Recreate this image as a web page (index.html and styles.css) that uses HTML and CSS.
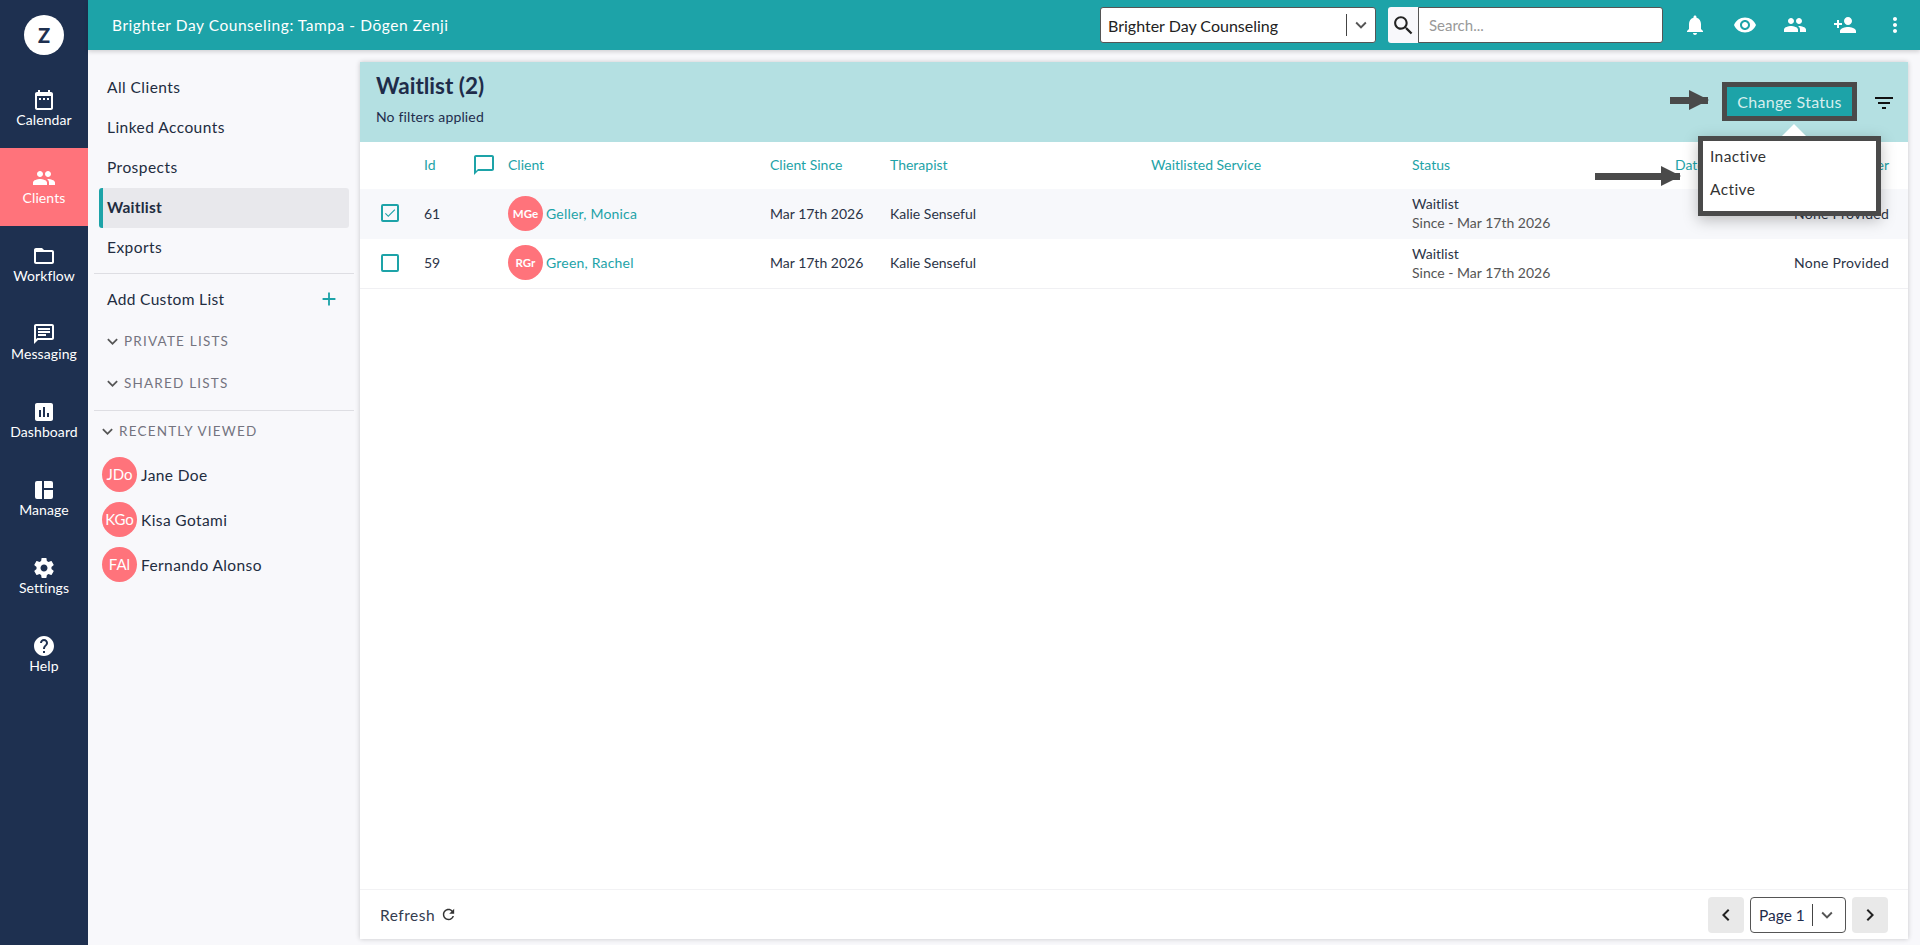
FILE: index.html
```html
<!doctype html>
<html>
<head>
  <meta charset="utf-8">
  <title>Waitlist</title>
  <link rel="stylesheet" href="styles.css">
</head>
<body>

<svg class="iconSheet" xmlns="http://www.w3.org/2000/svg">
  <symbol id="i-calendar" viewBox="0 0 24 24"><path d="M19 4h-1V2h-2v2H8V2H6v2H5c-1.1 0-2 .9-2 2v14c0 1.1.9 2 2 2h14c1.1 0 2-.9 2-2V6c0-1.1-.9-2-2-2zm0 16H5V8h14v12zM7 10h2v2H7zm4 0h2v2h-2zm4 0h2v2h-2z"/></symbol>
  <symbol id="i-people" viewBox="0 0 24 24"><path d="M16 11c1.66 0 2.99-1.34 2.99-3S17.66 5 16 5c-1.66 0-3 1.34-3 3s1.34 3 3 3zm-8 0c1.66 0 2.99-1.34 2.99-3S9.66 5 8 5C6.34 5 5 6.34 5 8s1.34 3 3 3zm0 2c-2.33 0-7 1.17-7 3.5V19h14v-2.5c0-2.33-4.67-3.5-7-3.5zm8 0c-.29 0-.62.02-.97.05 1.16.84 1.97 1.97 1.97 3.45V19h6v-2.5c0-2.33-4.67-3.5-7-3.5z"/></symbol>
  <symbol id="i-folder" viewBox="0 0 24 24"><path d="M20 6h-8l-2-2H4c-1.1 0-1.99.9-1.99 2L2 18c0 1.1.9 2 2 2h16c1.1 0 2-.9 2-2V8c0-1.1-.9-2-2-2zm0 12H4V8h16v10z"/></symbol>
  <symbol id="i-message" viewBox="0 0 24 24"><path d="M20 2H4c-1.1 0-2 .9-2 2v18l4-4h14c1.1 0 2-.9 2-2V4c0-1.1-.9-2-2-2zm0 14H5.17L4 17.17V4h16v12zM6 12h8v2H6zm0-3h12v2H6zm0-3h12v2H6z"/></symbol>
  <symbol id="i-chart" viewBox="0 0 24 24"><path d="M19 3H5c-1.1 0-2 .9-2 2v14c0 1.1.9 2 2 2h14c1.1 0 2-.9 2-2V5c0-1.1-.9-2-2-2zM9 17H7v-7h2v7zm4 0h-2V7h2v10zm4 0h-2v-4h2v4z"/></symbol>
  <symbol id="i-manage" viewBox="0 0 24 24"><path d="M5 3h5v18H5a2 2 0 0 1-2-2V5a2 2 0 0 1 2-2zm7 0h7a2 2 0 0 1 2 2v5h-9zm0 9h9v7a2 2 0 0 1-2 2h-7z"/></symbol>
  <symbol id="i-settings" viewBox="0 0 24 24"><path d="M19.43 12.98c.04-.32.07-.64.07-.98s-.03-.66-.07-.98l2.11-1.65c.19-.15.24-.42.12-.64l-2-3.46c-.12-.22-.39-.3-.61-.22l-2.49 1c-.52-.4-1.08-.73-1.69-.98l-.38-2.65C14.46 2.18 14.25 2 14 2h-4c-.25 0-.46.18-.49.42l-.38 2.65c-.61.25-1.17.59-1.69.98l-2.49-1c-.23-.09-.49 0-.61.22l-2 3.46c-.13.22-.07.49.12.64l2.11 1.65c-.04.32-.07.65-.07.98s.03.66.07.98l-2.11 1.65c-.19.15-.24.42-.12.64l2 3.46c.12.22.39.3.61.22l2.49-1c.52.4 1.08.73 1.69.98l.38 2.65c.03.24.24.42.49.42h4c.25 0 .46-.18.49-.42l.38-2.65c.61-.25 1.17-.59 1.69-.98l2.49 1c.23.09.49 0 .61-.22l2-3.46c.12-.22.07-.49-.12-.64l-2.11-1.65zM12 15.5c-1.93 0-3.5-1.57-3.5-3.5s1.57-3.5 3.5-3.5 3.5 1.57 3.5 3.5-1.57 3.5-3.5 3.5z"/></symbol>
  <symbol id="i-help" viewBox="0 0 24 24"><path d="M12 2C6.48 2 2 6.48 2 12s4.48 10 10 10 10-4.48 10-10S17.52 2 12 2zm1 17h-2v-2h2v2zm2.07-7.75l-.9.92C13.45 12.9 13 13.5 13 15h-2v-.5c0-1.1.45-2.1 1.17-2.83l1.24-1.26c.37-.36.59-.86.59-1.41 0-1.1-.9-2-2-2s-2 .9-2 2H8c0-2.21 1.79-4 4-4s4 1.79 4 4c0 .88-.36 1.68-.93 2.25z"/></symbol>
  <symbol id="i-bell" viewBox="0 0 24 24"><path d="M12 22c1.1 0 2-.9 2-2h-4c0 1.1.9 2 2 2zm6-6v-5c0-3.07-1.63-5.64-4.5-6.32V4c0-.83-.67-1.5-1.5-1.5s-1.5.67-1.5 1.5v.68C7.64 5.36 6 7.92 6 11v5l-2 2v1h16v-1l-2-2z"/></symbol>
  <symbol id="i-eye" viewBox="0 0 24 24"><path d="M12 4.5C7 4.5 2.73 7.61 1 12c1.73 4.39 6 7.5 11 7.5s9.27-3.11 11-7.5c-1.73-4.39-6-7.5-11-7.5zM12 17c-2.76 0-5-2.24-5-5s2.24-5 5-5 5 2.24 5 5-2.24 5-5 5zm0-8c-1.66 0-3 1.34-3 3s1.34 3 3 3 3-1.34 3-3-1.34-3-3-3z"/></symbol>
  <symbol id="i-personadd" viewBox="0 0 24 24"><path d="M15 12c2.21 0 4-1.79 4-4s-1.79-4-4-4-4 1.79-4 4 1.79 4 4 4zm-9-2V7H4v3H1v2h3v3h2v-3h3v-2H6zm9 4c-2.67 0-8 1.34-8 4v2h16v-2c0-2.66-5.33-4-8-4z"/></symbol>
  <symbol id="i-more" viewBox="0 0 24 24"><path d="M12 8c1.1 0 2-.9 2-2s-.9-2-2-2-2 .9-2 2 .9 2 2 2zm0 2c-1.1 0-2 .9-2 2s.9 2 2 2 2-.9 2-2-.9-2-2-2zm0 6c-1.1 0-2 .9-2 2s.9 2 2 2 2-.9 2-2-.9-2-2-2z"/></symbol>
  <symbol id="i-search" viewBox="0 0 24 24"><path d="M15.5 14h-.79l-.28-.27C15.41 12.59 16 11.11 16 9.5 16 5.91 13.09 3 9.5 3S3 5.91 3 9.5 5.91 16 9.5 16c1.61 0 3.09-.59 4.23-1.57l.27.28v.79l5 4.99L20.49 19l-4.99-5zm-6 0C7.01 14 5 11.99 5 9.5S7.01 5 9.5 5 14 7.01 14 9.5 11.99 14 9.5 14z"/></symbol>
  <symbol id="i-refresh" viewBox="0 0 24 24"><path d="M17.65 6.35C16.2 4.9 14.21 4 12 4c-4.42 0-7.99 3.58-7.99 8s3.57 8 7.99 8c3.73 0 6.84-2.55 7.73-6h-2.08c-.82 2.33-3.04 4-5.65 4-3.31 0-6-2.69-6-6s2.69-6 6-6c1.66 0 3.14.69 4.22 1.78L13 11h7V4l-2.35 2.35z"/></symbol>
  <symbol id="i-chat" viewBox="0 0 24 24"><path d="M20 2H4c-1.1 0-2 .9-2 2v18l4-4h14c1.1 0 2-.9 2-2V4c0-1.1-.9-2-2-2zm0 14H6l-2 2V4h16v12z"/></symbol>
  <symbol id="i-filter" viewBox="0 0 24 24"><path d="M10 18h4v-2h-4v2zM3 6v2h18V6H3zm3 7h12v-2H6v2z"/></symbol>
  <symbol id="i-down" viewBox="0 0 24 24"><path d="M7.41 8.59 12 13.17l4.59-4.58L18 10l-6 6-6-6z"/></symbol>
  <symbol id="i-left" viewBox="0 0 24 24"><path d="M15.41 16.59 10.83 12l4.58-4.59L14 6l-6 6 6 6z"/></symbol>
  <symbol id="i-right" viewBox="0 0 24 24"><path d="M8.59 16.59 13.17 12 8.59 7.41 10 6l6 6-6 6z"/></symbol>
  <symbol id="i-plus" viewBox="0 0 24 24"><path d="M19 13h-6v6h-2v-6H5v-2h6V5h2v6h6z"/></symbol>
  <symbol id="i-check" viewBox="0 0 24 24"><path d="M9 16.2 4.8 12l-1.4 1.4L9 19 21 7l-1.4-1.4z"/></symbol>
</svg>

<nav class="mainNav">
  <div class="logoWrap"><div class="logo">Z</div></div>
  <a class="navItem"><svg class="navIcon"><use href="#i-calendar"/></svg><span>Calendar</span></a>
  <a class="navItem active"><svg class="navIcon"><use href="#i-people"/></svg><span>Clients</span></a>
  <a class="navItem"><svg class="navIcon"><use href="#i-folder"/></svg><span>Workflow</span></a>
  <a class="navItem"><svg class="navIcon"><use href="#i-message"/></svg><span>Messaging</span></a>
  <a class="navItem"><svg class="navIcon"><use href="#i-chart"/></svg><span>Dashboard</span></a>
  <a class="navItem"><svg class="navIcon"><use href="#i-manage"/></svg><span>Manage</span></a>
  <a class="navItem"><svg class="navIcon"><use href="#i-settings"/></svg><span>Settings</span></a>
  <a class="navItem"><svg class="navIcon"><use href="#i-help"/></svg><span>Help</span></a>
</nav>

<div class="rightSide">
  <header class="topBar">
    <div class="topTitle">Brighter Day Counseling: Tampa - Dōgen Zenji</div>
    <div class="practiceSelect">
      <span class="practiceName">Brighter Day Counseling</span>
      <span class="selectDivider"></span>
      <svg class="selectArrow"><use href="#i-down"/></svg>
    </div>
    <div class="searchBox">
      <span class="searchBtn"><svg><use href="#i-search"/></svg></span>
      <span class="searchInput">Search...</span>
    </div>
    <div class="topIcons">
      <svg><use href="#i-bell"/></svg>
      <svg><use href="#i-eye"/></svg>
      <svg><use href="#i-people"/></svg>
      <svg><use href="#i-personadd"/></svg>
      <svg><use href="#i-more"/></svg>
    </div>
  </header>

  <div class="content">
    <aside class="subNav">
      <div class="subLinks">
        <a class="subLink">All Clients</a>
        <a class="subLink">Linked Accounts</a>
        <a class="subLink">Prospects</a>
        <a class="subLink current">Waitlist</a>
        <a class="subLink">Exports</a>
      </div>
      <div class="addList">
        <span>Add Custom List</span>
        <svg><use href="#i-plus"/></svg>
      </div>
      <div class="groupTitle"><svg><use href="#i-down"/></svg>PRIVATE LISTS</div>
      <div class="groupTitle"><svg><use href="#i-down"/></svg>SHARED LISTS</div>
      <div class="recentBlock">
        <div class="groupTitle recent"><svg><use href="#i-down"/></svg>RECENTLY VIEWED</div>
        <div class="recentRow"><span class="avatar big">JDo</span>Jane Doe</div>
        <div class="recentRow"><span class="avatar big">KGo</span>Kisa Gotami</div>
        <div class="recentRow"><span class="avatar big">FAl</span>Fernando Alonso</div>
      </div>
    </aside>

    <main class="card">
      <div class="cardHead">
        <div>
          <h1>Waitlist (2)</h1>
          <div class="filterNote">No filters applied</div>
        </div>
        <div class="headActions">
          <button class="statusBtn">Change Status</button>
          <svg class="filterIcon"><use href="#i-filter"/></svg>
        </div>
      </div>

      <div class="tableRow tableHead">
        <span></span>
        <span>Id</span>
        <span><svg class="chatIcon"><use href="#i-chat"/></svg></span>
        <span>Client</span>
        <span>Client Since</span>
        <span>Therapist</span>
        <span>Waitlisted Service</span>
        <span>Status</span>
        <span>Date Added</span>
        <span class="alignRight">Referrer</span>
      </div>

      <div class="tableRow dataRow shaded">
        <span class="checkBox"><svg><use href="#i-check"/></svg></span>
        <span>61</span>
        <span></span>
        <span class="clientCell"><span class="avatar">MGe</span><a>Geller, Monica</a></span>
        <span>Mar 17th 2026</span>
        <span>Kalie Senseful</span>
        <span></span>
        <span class="statusCell">Waitlist<small>Since - Mar 17th 2026</small></span>
        <span></span>
        <span class="alignRight">None Provided</span>
      </div>

      <div class="tableRow dataRow">
        <span class="checkBox"></span>
        <span>59</span>
        <span></span>
        <span class="clientCell"><span class="avatar">RGr</span><a>Green, Rachel</a></span>
        <span>Mar 17th 2026</span>
        <span>Kalie Senseful</span>
        <span></span>
        <span class="statusCell">Waitlist<small>Since - Mar 17th 2026</small></span>
        <span></span>
        <span class="alignRight">None Provided</span>
      </div>

      <div class="spacer"></div>

      <div class="cardFoot">
        <div class="refresh">Refresh <svg><use href="#i-refresh"/></svg></div>
        <div class="pager">
          <span class="pageBtn"><svg><use href="#i-left"/></svg></span>
          <span class="pageSelect">Page 1<span class="selectDivider"></span><svg class="selectArrow"><use href="#i-down"/></svg></span>
          <span class="pageBtn"><svg><use href="#i-right"/></svg></span>
        </div>
      </div>

      <!-- status menu and the two annotation arrows sit over the table -->
      <div class="statusMenu">
        <div>Inactive</div>
        <div>Active</div>
      </div>
      <div class="arrow arrowOne"></div>
      <div class="arrow arrowTwo"></div>
    </main>
  </div>
</div>

</body>
</html>
```

FILE: styles.css
```css
*{
  box-sizing: border-box;
}
html,body{
  height: 100%;
}
body{
  margin: 0;
  display: flex;
  overflow: hidden;
  background-color: #f8f8fb;
  color: #1f2d4d;
  font-family: "Lato", "Liberation Sans", sans-serif;
  font-size: 15px;
}
svg{
  fill: currentColor;
}
.iconSheet{
  display: none;
}

/* left nav */
.mainNav{
  width: 88px;
  flex: none;
  background-color: #1e3050;
  color: #fff;
}
.logoWrap{
  height: 70px;
  padding-top: 15px;
}
.logo{
  width: 40px;
  height: 40px;
  margin: 0 auto;
  border-radius: 50%;
  background-color: #fff;
  color: #1e3050;
  font-size: 20px;
  font-weight: 900;
  line-height: 40px;
  text-align: center;
}
.navItem{
  display: flex;
  flex-direction: column;
  align-items: center;
  height: 78px;
  padding-top: 18px;
  font-size: 14px;
  line-height: 18px;
  letter-spacing: 0.1px;
}
.navItem.active{
  background-color: #ff737b;
}
.navIcon{
  width: 24px;
  height: 24px;
  margin-bottom: -1px;
}

/* top bar */
.rightSide{
  flex: 1;
  min-width: 0;
  display: flex;
  flex-direction: column;
}
.topBar{
  height: 50px;
  flex: none;
  display: flex;
  align-items: center;
  padding-left: 24px;
  background-color: #1da3a8;
  color: #fff;
  box-shadow: 0 2px 4px rgba(0,0,0,0.15);
  position: relative;
  z-index: 2;
}
.topTitle{
  flex: 1;
  font-size: 15.5px;
  letter-spacing: 0.55px;
}
.practiceSelect{
  width: 276px;
  height: 36px;
  display: flex;
  align-items: center;
  padding-left: 7px;
  background-color: #fff;
  border: 1px solid #555;
  border-radius: 3px;
  color: #222;
}
.practiceName{
  flex: 1;
  font-size: 16px;
}
.selectDivider{
  width: 1px;
  height: 22px;
  background-color: #444;
}
.selectArrow{
  width: 22px;
  height: 22px;
  margin: 0 3px;
  color: #555;
}
.searchBox{
  width: 275px;
  height: 36px;
  margin-left: 12px;
  display: flex;
}
.searchBtn{
  width: 30px;
  display: flex;
  align-items: center;
  justify-content: center;
  background-color: #f8f8fb;
  border-radius: 3px 0 0 3px;
  color: #222;
}
.searchBtn svg{
  width: 25px;
  height: 25px;
}
.searchInput{
  flex: 1;
  padding-left: 10px;
  line-height: 34px;
  background-color: #fff;
  border: 1px solid #555;
  border-radius: 0 3px 3px 0;
  color: #999;
}
.topIcons{
  display: flex;
  width: 257px;
  padding-left: 20px;
  gap: 26px;
}
.topIcons svg{
  width: 24px;
  height: 24px;
}

.content{
  flex: 1;
  min-height: 0;
  display: flex;
}

/* lists column */
.subNav{
  width: 272px;
  flex: none;
  padding: 18px 6px 0;
  color: #222c40;
}
.subLinks{
  padding-left: 5px;
  padding-right: 5px;
}
.subLink{
  display: block;
  height: 40px;
  padding-left: 8px;
  line-height: 38px;
  font-size: 15.5px;
  letter-spacing: 0.45px;
}
.subLink.current{
  padding-left: 4px;
  border-left: 4px solid #1da3a8;
  border-radius: 3px;
  background-color: #e8e8ec;
  font-weight: 700;
  letter-spacing: 0.2px;
}
.addList{
  display: flex;
  justify-content: space-between;
  align-items: center;
  height: 47px;
  margin-top: 5px;
  padding: 3px 14px 0 13px;
  border-top: 1px solid #dedee3;
  font-size: 15.5px;
  letter-spacing: 0.35px;
}
.addList svg{
  width: 22px;
  height: 22px;
  color: #1da3a8;
}
.groupTitle{
  display: flex;
  align-items: center;
  height: 42px;
  padding-left: 8px;
  font-size: 13.5px;
  letter-spacing: 1.2px;
  color: #74747f;
}
.groupTitle svg{
  width: 21px;
  height: 21px;
  margin-right: 1px;
  color: #555;
}
.recentBlock{
  margin-top: 6px;
  border-top: 1px solid #dedee3;
}
.groupTitle.recent{
  height: 40px;
  padding-left: 3px;
  margin-bottom: 1px;
}
.recentRow{
  display: flex;
  align-items: center;
  gap: 4px;
  height: 45px;
  padding-left: 8px;
  font-size: 15.5px;
  letter-spacing: 0.4px;
}
.avatar{
  width: 35px;
  height: 35px;
  flex: none;
  border-radius: 50%;
  background-color: #ff737b;
  color: #fff;
  font-size: 11.5px;
  font-weight: 700;
  line-height: 35px;
  letter-spacing: 0;
  text-align: center;
}
.avatar.big{
  font-size: 15px;
  font-weight: 400;
}

/* the card */
.card{
  position: relative;
  flex: 1;
  min-width: 0;
  display: flex;
  flex-direction: column;
  margin: 12px 12px 6px 0;
  background-color: #fff;
  box-shadow: 0 0 5px rgba(0,0,0,0.2);
}
.cardHead{
  height: 80px;
  flex: none;
  display: flex;
  justify-content: space-between;
  padding: 10px 12px 0 16px;
  background-color: #b4e0e2;
}
h1{
  margin: 0;
  font-size: 22.5px;
  line-height: 27px;
  font-weight: 700;
  color: #1e2c4a;
}
.filterNote{
  margin-top: 9px;
  font-size: 14px;
  line-height: 18px;
  letter-spacing: 0.15px;
}
.headActions{
  display: flex;
  align-items: flex-start;
  padding-top: 10px;
}
.statusBtn{
  width: 135px;
  height: 39px;
  padding: 0;
  background-color: #1da3a8;
  border: 5px solid #4a4a4a;
  color: #d6eeee;
  font-family: inherit;
  font-size: 16px;
  letter-spacing: 0.3px;
}
.filterIcon{
  width: 24px;
  height: 24px;
  margin: 9px 0 0 15px;
  color: #111;
}

/* table rows */
.tableRow{
  display: grid;
  grid-template-columns: 64px 49px 35px 262px 120px 261px 261px 263px 105px 109px;
  align-items: center;
  flex: none;
  padding-bottom: 2px;
  font-size: 14px;
}
.tableHead{
  height: 47px;
  color: #1da3a8;
}
.dataRow{
  height: 50px;
  border-bottom: 1px solid #f0f0f3;
  color: #2b3447;
}
.dataRow.shaded{
  border-bottom: 0;
  background-color: #f7f8fb;
}
.alignRight{
  text-align: right;
}
.dataRow .alignRight{
  letter-spacing: 0.25px;
}
.chatIcon{
  display: block;
  width: 24px;
  height: 24px;
  margin-left: -1px;
  color: #1da3a8;
}
.checkBox{
  width: 18px;
  height: 18px;
  margin-left: 21px;
  border: 2px solid #1da3a8;
  border-radius: 2px;
  color: #1da3a8;
}
.checkBox svg{
  display: block;
  width: 14px;
  height: 14px;
}
.clientCell{
  display: flex;
  align-items: center;
  gap: 3px;
  color: #1da3a8;
}
.clientCell a{
  letter-spacing: 0.2px;
}
.statusCell small{
  display: block;
  margin-top: 2px;
  font-size: 14px;
  color: #555;
}
.spacer{
  flex: 1;
}

/* footer */
.cardFoot{
  height: 50px;
  flex: none;
  display: flex;
  justify-content: space-between;
  align-items: center;
  padding: 0 20px;
  border-top: 1px solid #f2f2f4;
}
.refresh{
  display: flex;
  align-items: center;
  gap: 5px;
  font-size: 15.5px;
  letter-spacing: 0.5px;
  color: #333c4f;
}
.refresh svg{
  width: 17px;
  height: 17px;
  color: #333;
}
.pager{
  display: flex;
  align-items: center;
  gap: 6px;
}
.pageBtn{
  width: 36px;
  height: 36px;
  display: flex;
  align-items: center;
  justify-content: center;
  background-color: #e9e9e9;
  border-radius: 4px;
  color: #222;
}
.pageBtn svg{
  width: 24px;
  height: 24px;
}
.pageSelect{
  display: flex;
  align-items: center;
  width: 96px;
  height: 36px;
  padding-left: 8px;
  border: 1px solid #555;
  border-radius: 4px;
  font-size: 15.5px;
}
.pageSelect .selectDivider{
  margin-left: 7px;
}

/* popover and arrows */
.statusMenu{
  position: absolute;
  left: 1338px;
  top: 74px;
  width: 183px;
  height: 80px;
  padding: 0 7px;
  background-color: #fff;
  border: 5px solid #4a4a4a;
  box-shadow: 0 4px 14px rgba(0,0,0,0.25);
  font-size: 15.5px;
  letter-spacing: 0.4px;
  color: #333;
}
.statusMenu div{
  height: 33px;
  line-height: 30px;
}
.statusMenu::before{
  content: "";
  position: absolute;
  left: 79px;
  top: -17px;
  border: 12px solid transparent;
  border-top: 0;
  border-bottom-color: #fff;
}
.arrow{
  position: absolute;
  height: 7px;
  background-color: #4a4a4a;
}
.arrow::after{
  content: "";
  position: absolute;
  right: -1px;
  top: -7px;
  border-style: solid;
  border-width: 10.5px 0 10.5px 20px;
  border-color: transparent transparent transparent #4a4a4a;
}
.arrowOne{
  left: 1310px;
  top: 35px;
  width: 38px;
}
.arrowTwo{
  left: 1235px;
  top: 111px;
  width: 85px;
}
```
